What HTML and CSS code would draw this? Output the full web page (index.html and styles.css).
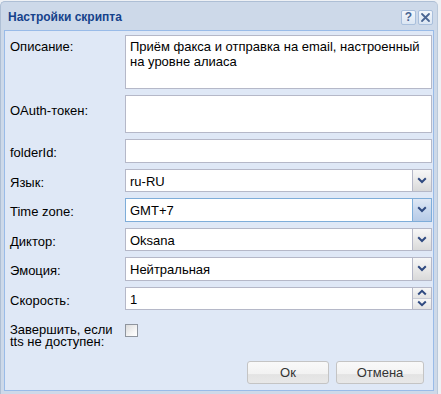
FILE: index.html
```html
<!DOCTYPE html>
<html lang="ru">
<head>
<meta charset="utf-8">
<title>Настройки скрипта</title>
<link rel="stylesheet" href="styles.css">
</head>
<body>
<div class="window">
  <div class="titlebar">
    <span class="title">Настройки скрипта</span>
    <div class="tools">
      <span class="tool tool-help">?</span>
      <span class="tool"><svg width="11" height="11" viewBox="0 0 11 11"><path d="M2 2 L9 9 M9 2 L2 9" stroke="#4a6693" stroke-width="1.8" fill="none" stroke-linecap="round"/></svg></span>
    </div>
  </div>
  <div class="panel">
    <div class="form">
      <div class="lbl lbl-ta">Описание:</div>
      <div class="field area area-1">Приём факса и отправка на email, настроенный на уровне алиаса</div>

      <div class="lbl lbl-oauth">OAuth-токен:</div>
      <div class="field area area-2"></div>

      <div class="lbl">folderId:</div>
      <div class="field single"></div>

      <div class="lbl">Язык:</div>
      <div class="field single combo"><span class="val">ru-RU</span><span class="trigger"><svg width="10" height="7" viewBox="0 0 10 7"><path d="M1.2 1.3 L5 5 L8.8 1.3" stroke="#2f4a80" stroke-width="2" fill="none"/></svg></span></div>

      <div class="lbl">Time zone:</div>
      <div class="field single combo focus"><span class="val">GMT+7</span><span class="trigger"><svg width="10" height="7" viewBox="0 0 10 7"><path d="M1.2 1.3 L5 5 L8.8 1.3" stroke="#2f4a80" stroke-width="2" fill="none"/></svg></span></div>

      <div class="lbl">Диктор:</div>
      <div class="field single combo"><span class="val">Oksana</span><span class="trigger"><svg width="10" height="7" viewBox="0 0 10 7"><path d="M1.2 1.3 L5 5 L8.8 1.3" stroke="#2f4a80" stroke-width="2" fill="none"/></svg></span></div>

      <div class="lbl">Эмоция:</div>
      <div class="field single combo"><span class="val">Нейтральная</span><span class="trigger"><svg width="10" height="7" viewBox="0 0 10 7"><path d="M1.2 1.3 L5 5 L8.8 1.3" stroke="#2f4a80" stroke-width="2" fill="none"/></svg></span></div>

      <div class="lbl">Скорость:</div>
      <div class="field single combo"><span class="val">1</span><span class="spinner"><span class="spin"><svg width="10" height="7" viewBox="0 0 10 7"><path d="M1.2 5.5 L5 1.8 L8.8 5.5" stroke="#2f4a80" stroke-width="2" fill="none"/></svg></span><span class="spin"><svg width="10" height="7" viewBox="0 0 10 7"><path d="M1.2 1.5 L5 5.2 L8.8 1.5" stroke="#2f4a80" stroke-width="2" fill="none"/></svg></span></span></div>

      <div class="lbl lbl-check">Завершить, если tts не доступен:</div>
      <div class="check-cell"><span class="checkbox"></span></div>
    </div>
    <div class="footer">
      <button class="btn btn-ok">Ок</button>
      <button class="btn btn-cancel">Отмена</button>
    </div>
  </div>
</div>
</body>
</html>
```

FILE: styles.css
```css
html, body {
  margin: 0;
  padding: 0;
}
body {
  background: #eef1f5;
  font-family: "Liberation Sans", Arial, sans-serif;
  font-size: 13px;
  color: #000;
  width: 441px;
  height: 394px;
  overflow: hidden;
}
.window {
  box-sizing: border-box;
  width: 438px;
  height: 395px;
  margin-top: 1px;
  background: #cdd9e9;
  border: 1px solid #aebfd5;
  border-right-color: #b9c8da;
  border-radius: 5px 5px 0 0;
  padding: 0 3px 0 3px;
}
.titlebar {
  height: 28px;
  display: flex;
  align-items: center;
  justify-content: space-between;
  padding-left: 4px;
}
.title {
  font-weight: bold;
  font-size: 12px;
  color: #15428b;
  margin-top: 1px;
}
.tools {
  display: flex;
  gap: 2px;
  margin-right: 1px;
  margin-top: 2px;
}
.tool {
  box-sizing: border-box;
  width: 15px;
  height: 15px;
  border: 1px solid #a9bfdc;
  border-radius: 2px;
  background: linear-gradient(#f3f7fc, #dbe6f3);
  display: flex;
  align-items: center;
  justify-content: center;
}
.tool-help {
  font-size: 12px;
  font-weight: bold;
  color: #4a6693;
  line-height: 1;
}
.panel {
  box-sizing: border-box;
  width: 430px;
  height: 361px;
  background: #dfe8f6;
  border: 1px solid #99bbe8;
  padding: 4px 1px 6px 5px;
  display: flex;
  flex-direction: column;
}
.form {
  display: grid;
  grid-template-columns: 115px 307px;
  row-gap: 6px;
  align-items: start;
}
.lbl {
  padding-top: 6px;
  line-height: 15px;
  white-space: nowrap;
}
.lbl-ta {
  padding-top: 4px;
}
.lbl-oauth {
  padding-top: 8px;
}
.lbl-check {
  white-space: normal;
  line-height: 12px;
  padding-top: 1px;
  margin-top: 7px;
  width: 105px;
}
.field {
  box-sizing: border-box;
  background: #fff;
  border: 1px solid #b5b8c8;
  line-height: 15px;
}
.area {
  padding: 3px 4px;
}
.area-1 {
  height: 54px;
}
.area-2 {
  height: 38px;
}
.single {
  height: 23.5px;
  padding: 0 0 0 4px;
  line-height: 19px;
  padding-top: 2px;
}
.combo {
  display: flex;
  padding: 0 0 0 4px;
}
.combo .val {
  flex: 1;
  line-height: 19px;
  padding-top: 2px;
}
.trigger {
  box-sizing: border-box;
  width: 19px;
  border-left: 1px solid #b5b8c8;
  background: linear-gradient(#f7f7f7, #e9e9e9 50%, #d9d9d9);
  display: flex;
  align-items: center;
  justify-content: center;
}
.focus {
  border-color: #7eadd9;
}
.focus .trigger {
  border-left-color: #7eadd9;
  background: linear-gradient(#dfe8f5, #c8d8ee 50%, #b7cbe7);
}
.spinner {
  box-sizing: border-box;
  width: 19px;
  border-left: 1px solid #b5b8c8;
  display: flex;
  flex-direction: column;
}
.spin {
  flex: 1;
  display: flex;
  align-items: center;
  justify-content: center;
  background: linear-gradient(#f7f7f7, #e3e3e3);
}
.spin + .spin {
  border-top: 1px solid #c9ccd6;
}
.check-cell {
  margin-top: 7px;
  padding-top: 1px;
}
.checkbox {
  display: block;
  box-sizing: border-box;
  width: 13px;
  height: 13px;
  border: 1px solid #8f959e;
  background: linear-gradient(135deg, #dcdcdc, #f8f8f8 70%, #fff);
}
.footer {
  margin-top: auto;
  display: flex;
  justify-content: flex-end;
  gap: 7px;
  padding-right: 8px;
}
.btn {
  box-sizing: border-box;
  height: 23px;
  border: 1px solid #c4c4c4;
  border-radius: 3px;
  background: linear-gradient(#f9f9f9, #f2f2f2 55%, #e3e3e3 60%, #e8e8e8);
  font-family: "Liberation Sans", Arial, sans-serif;
  font-size: 13px;
  color: #333;
  padding: 0;
  line-height: 21px;
}
.btn-ok {
  width: 82px;
}
.btn-cancel {
  width: 88px;
}
```
